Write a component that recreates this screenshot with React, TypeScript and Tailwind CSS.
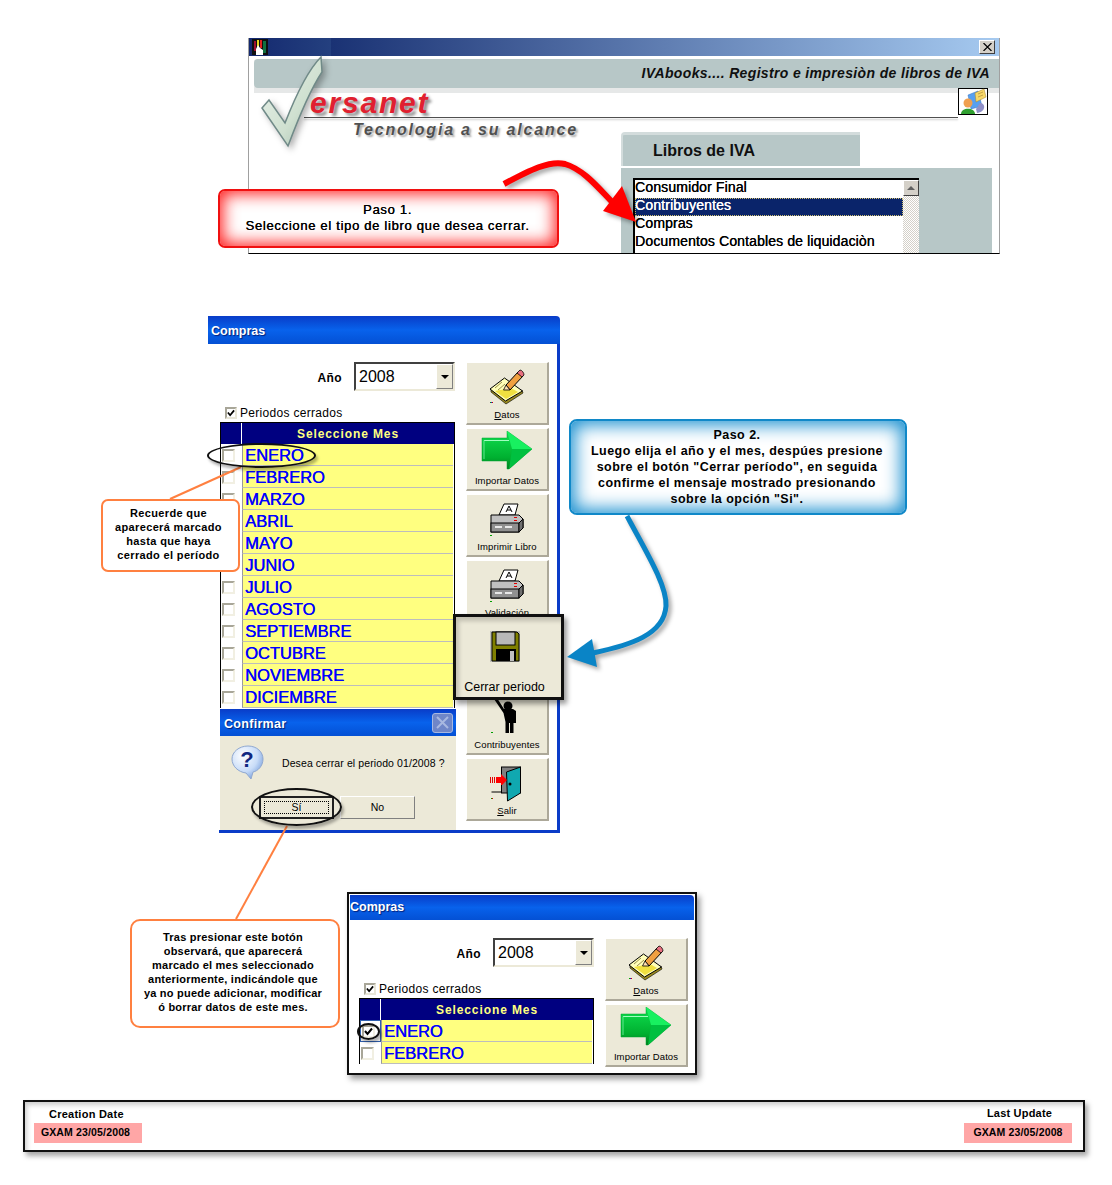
import type { ReactNode } from 'react';

const MONTHS = ['ENERO', 'FEBRERO', 'MARZO', 'ABRIL', 'MAYO', 'JUNIO', 'JULIO', 'AGOSTO', 'SEPTIEMBRE', 'OCTUBRE', 'NOVIEMBRE', 'DICIEMBRE'];

const sans = "font-['Liberation_Sans',Arial,sans-serif]";

function NoteIcon() {
  return (
    <svg width="36" height="38" viewBox="0 -1 36 38" className="overflow-visible">
      <path d="M2 24 L17 36 L34 25 L33 22 L17 32 L2 21 Z" fill="#9a8a20" stroke="#000" strokeWidth="0.6" />
      <path d="M1 21 L15.5 10 L33.5 23 L16.5 33 Z" fill="#ffffb8" stroke="#000" strokeWidth="1" />
      <path d="M6 23 L17 31 L29 24 L22 20 Z" fill="#f0e040" />
      <path d="M6 20 L13 14 M9 22 L16 16" stroke="#706020" strokeWidth="0.7" />
      <path d="M17 17 L29 4 L34 8 L21 22 Z" fill="#f0a040" stroke="#000" strokeWidth="1" />
      <path d="M14.5 22 L17 17 L21 22 Z" fill="#ffe0b0" stroke="#000" strokeWidth="0.8" />
      <path d="M28 5 L31 2 C33 2 35 5 35 7 L33 9 Z" fill="#e87080" stroke="#000" strokeWidth="0.8" />
      <rect x="1" y="34" width="1" height="1" fill="#00a000" />
      <rect x="2" y="34" width="1" height="1" fill="#2020d0" />
      <rect x="3" y="34" width="1" height="1" fill="#d00000" />
    </svg>
  );
}

function ArrowIcon() {
  return (
    <svg width="52" height="42" viewBox="0 0 52 42">
      <defs>
        <linearGradient id="arr" x1="0" y1="0" x2="0" y2="1">
          <stop offset="0" stopColor="#10e050" />
          <stop offset="0.7" stopColor="#00b030" />
          <stop offset="1" stopColor="#008020" />
        </linearGradient>
      </defs>
      <path d="M1 7 L26 7 L26 0 L51 18 L28 38 L26 38 L26 30 L1 30 Z" fill="url(#arr)" stroke="#00a030" strokeWidth="0.5" />
      <path d="M26 0 L51 18 L31 18 Z" fill="#18f060" />
      <path d="M31 18 L51 18 L28 38 Z" fill="#00c040" />
      <path d="M3 9.5 H28" stroke="#a0ffc0" strokeWidth="1" />
      <path d="M3 9.5 V28" stroke="#60e890" strokeWidth="1" />
    </svg>
  );
}

function PrinterIcon() {
  return (
    <svg width="36" height="38" viewBox="0 -2 36 38">
      <path d="M10 14 L15 3 L29 3 L26 14 Z" fill="#fff" stroke="#000" />
      <path d="M17 11 L20 5 L23 11 M18 9 H22" fill="none" stroke="#000" />
      <path d="M2 14 H30 L34 18 V27 L30 31 H2 Z" fill="#c0c0c0" stroke="#000" />
      <rect x="2" y="22" width="28" height="9" fill="#909090" stroke="#000" />
      <path d="M30 22 L34 18 V27 L30 31 Z" fill="#707070" stroke="#000" />
      <rect x="6" y="25" width="7" height="2" fill="#e8e8e8" />
      <rect x="16" y="25" width="7" height="2" fill="#e8e8e8" />
      <rect x="25" y="16" width="3" height="1" fill="#e00000" />
      <rect x="25" y="19" width="3" height="1" fill="#e00000" />
      <rect x="1" y="34" width="2" height="1" fill="#00a000" />
    </svg>
  );
}

function PersonIcon() {
  return (
    <svg width="36" height="38" viewBox="0 -1 36 38">
      <circle cx="19" cy="8" r="4.5" fill="#000" />
      <path d="M5 1 L8 0 L15 11 H24 L27 13 V25 H24.5 V35 H21 V25 H20 V35 H16.5 V24 L14.5 15 Z" fill="#000" />
      <rect x="2" y="34" width="2" height="1" fill="#00a000" />
    </svg>
  );
}

function DoorIcon() {
  return (
    <svg width="36" height="38" viewBox="0 -2 36 38" className="overflow-visible">
      <rect x="12.5" y="2" width="19" height="26" fill="#808080" stroke="#000" />
      <path d="M17.5 7 L31.5 2 V28 L18.5 36 Z" fill="#10a8b0" stroke="#000" />
      <circle cx="21" cy="19" r="1.5" fill="#000" />
      <path d="M1.5 12 V18 M3.5 12 V18 M5.5 12 V18" stroke="#e00000" strokeWidth="1" />
      <path d="M7 12 H12 V9 L18 15 L12 21 V18 H7 Z" fill="#ff0000" />
      <path d="M2.5 27 H12.5 V20" fill="none" stroke="#000" />
      <rect x="2" y="33" width="1" height="1" fill="#00a000" />
      <rect x="3" y="33" width="1" height="1" fill="#d00000" />
    </svg>
  );
}

function FloppyIcon() {
  return (
    <svg width="32" height="34" viewBox="0 0 32 34">
      <rect x="1" y="1" width="30" height="31" fill="#c0c0b8" />
      <path d="M3 2 H28 L30 4 V31 H3 Z" fill="#808000" stroke="#000" />
      <rect x="7" y="2" width="19" height="13" fill="#b8b8b8" stroke="#000" />
      <rect x="7" y="19" width="20" height="12" fill="#000" />
      <rect x="21" y="21" width="4" height="10" fill="#c0c0c0" />
    </svg>
  );
}

function QuestionIcon() {
  return (
    <svg width="34" height="36" viewBox="0 0 34 36">
      <defs>
        <radialGradient id="bub" cx="0.35" cy="0.3" r="0.8">
          <stop offset="0" stopColor="#ffffff" />
          <stop offset="0.6" stopColor="#c8dcf8" />
          <stop offset="1" stopColor="#7098d8" />
        </radialGradient>
      </defs>
      <path d="M17 1 C26 1 32 7 32 14 C32 21 27 26 22 27 L20 34 L15 28 C7 27 1 21 1 14 C1 7 8 1 17 1 Z" fill="url(#bub)" stroke="#90a8d0" />
      <text x="16" y="22" textAnchor="middle" fontFamily="Liberation Sans" fontWeight="700" fontSize="22" fill="#102880">?</text>
    </svg>
  );
}

function UserHelpIcon() {
  return (
    <svg width="30" height="27" viewBox="0 0 30 27">
      <rect x="0.5" y="0.5" width="29" height="26" fill="#fff" stroke="#000" />
      <path d="M10 7 L20 3 L24 18 L13 21 Z" fill="#58a0f0" stroke="#3070c0" strokeWidth="0.5" />
      <path d="M17 5 L26 1 L28 9 L22 12 L18 14 Z" fill="#f8d868" stroke="#a08030" strokeWidth="0.5" />
      <path d="M20 6 L25 4 M20 9 L25 7" stroke="#a08030" strokeWidth="0.6" />
      <path d="M22 15 C28 15 28 24 19 25 L18 21 Z" fill="#9090c8" />
      <circle cx="10" cy="15" r="4.5" fill="#f0a050" />
      <path d="M3 26 C3 19 17 19 17 26 Z" fill="#30a030" />
    </svg>
  );
}

function ToolButton({ icon, label, hot }: { icon?: ReactNode; label?: string; hot?: string }) {
  return (
    <div className="w-[83px] h-[63px] flex flex-col items-center bg-[#ece9d8] border-r-2 border-b-2 border-r-[#aca899] border-b-[#aca899] border-t border-l border-t-white border-l-white">
      <div className="h-[42px] mt-[2px] flex items-center justify-center">{icon}</div>
      <span className={`${sans} text-[9.5px] leading-[12px] tracking-[0.1px] text-black whitespace-nowrap mt-[2px]`}>
        {hot && <span className="underline">{hot}</span>}
        {label}
      </span>
    </div>
  );
}

function Checkbox({ checked }: { checked?: boolean }) {
  return (
    <span className="w-[13px] h-[13px] flex items-center justify-center bg-white border-2 border-t-[#a8a698] border-l-[#a8a698] border-r-[#f1efe2] border-b-[#f1efe2]">
      {checked && (
        <svg width="9" height="9" viewBox="0 0 9 9">
          <path d="M1 4 L3.5 7 L8 1.5" fill="none" stroke="#000" strokeWidth="2" />
        </svg>
      )}
    </span>
  );
}

function MonthRow({ name, checked }: { name: string; checked?: boolean }) {
  return (
    <div className="flex h-[22px]">
      <div className={`w-[21px] flex items-center pl-[1px] ${checked ? 'border border-[#3060b0]' : ''}`}>
        <Checkbox checked={checked} />
      </div>
      <div className="flex-1 flex items-center bg-[#ffff80] border-b border-b-[#bdbdbd] border-l border-l-[#9a9a9a] mr-[1px]">
        <span className={`${sans} pl-[2px] text-[16.5px] leading-[20px] text-[#0000ff] [text-shadow:0.4px_0_0_#0000ff]`}>{name}</span>
      </div>
    </div>
  );
}

function ComprasForm({ months, checkFirst, children }: { months: string[]; checkFirst?: boolean; children: ReactNode }) {
  return (
    <div className="flex bg-white">
      <div className="w-[235px]">
        <div className="flex items-center justify-end gap-[12px] pt-[18px]">
          <span className={`${sans} pt-[2px] text-[12px] font-bold tracking-[0.4px] text-black`}>Año</span>
          <div className="w-[101px] h-[29px] flex border-2 border-t-[#404040] border-l-[#404040] border-r-[#ece9d8] border-b-[#ece9d8] bg-white">
            <span className={`${sans} flex-1 pl-[3px] pt-[1px] text-[16px] leading-[24px] text-black`}>2008</span>
            <div className="w-[17px] flex items-center justify-center bg-[#ece9d8] border border-t-white border-l-white border-r-[#808080] border-b-[#808080]">
              <span className="w-0 h-0 border-l-[4px] border-r-[4px] border-t-[4px] border-l-transparent border-r-transparent border-t-black" />
            </div>
          </div>
        </div>
        <div className="flex items-center gap-[3px] pl-[5px] mt-[15px] h-[14px]">
          <span className="w-[12px] h-[12px] flex items-center justify-center bg-white border-2 border-t-[#a8a698] border-l-[#a8a698] border-r-[#e8e6d8] border-b-[#e8e6d8]">
            <svg width="8" height="8" viewBox="0 0 9 9">
              <path d="M1 4 L3.5 7 L8 1.5" fill="none" stroke="#000" strokeWidth="2" />
            </svg>
          </span>
          <span className={`${sans} text-[12px] tracking-[0.3px] text-black`}>Periodos cerrados</span>
        </div>
        <div className="mt-[2px] border-l border-r border-black">
          <div className="flex h-[22px] bg-[#000080] border-t border-black">
            <div className="w-[21px] border-r border-r-white" />
            <div className={`${sans} flex-1 pt-[1px] text-center text-[12px] leading-[21px] font-bold tracking-[0.9px] text-[#ffff80]`}>Seleccione Mes</div>
          </div>
          {months.map((m, i) => (
            <MonthRow key={m} name={m} checked={checkFirst && i === 0} />
          ))}
        </div>
      </div>
      <div className="flex flex-col gap-[3px] ml-[11px] pt-[18px]">{children}</div>
    </div>
  );
}

function TitleBar({ title, className }: { title: string; className: string }) {
  return (
    <div className={`flex items-center bg-gradient-to-b from-[#0a3cc8] via-[#0862ec] to-[#0450d4] rounded-tr-[4px] ${className}`}>
      <span className={`${sans} text-[12.5px] font-bold text-white [text-shadow:1px_1px_1px_#00207a]`}>{title}</span>
    </div>
  );
}

function VersanetWindow() {
  return (
    <div className="absolute left-[248px] top-[38px] w-[752px] h-[216px] flex flex-col bg-white border-l border-r border-l-[#a0a0a0] border-r-[#a0a0a0] border-b border-b-black overflow-hidden">
      <div className="h-[18px] shrink-0 flex items-center justify-between bg-[linear-gradient(90deg,#14296f_0,#24407f_82px,#1a3274_82px,#a6caf0_100%)]">
        <svg className="ml-[3px]" width="16" height="16" viewBox="0 0 16 16">
          <rect width="16" height="16" fill="#101010" />
          <rect x="2" y="2" width="2" height="10" fill="#a01030" />
          <rect x="5" y="1" width="2" height="7" fill="#e8d820" />
          <rect x="8" y="1" width="2" height="8" fill="#e02020" />
          <rect x="11" y="2" width="3" height="12" fill="#107040" />
          <path d="M4 16 V10 L6 6 L8 9 L11 11 L11 16 Z" fill="#fff" />
        </svg>
        <div className="w-[16px] h-[14px] mr-[4px] flex items-center justify-center bg-[#d4d0c8] border border-t-white border-l-white border-r-[#404040] border-b-[#404040]">
          <svg width="9" height="8" viewBox="0 0 9 8">
            <path d="M0.5 0 L8.5 8 M8.5 0 L0.5 8" stroke="#000" strokeWidth="1.2" />
          </svg>
        </div>
      </div>
      <div className="mt-[3px] ml-[5px] shrink-0 h-[34px] bg-[#e6e8e8] rounded-tl-[4px]">
        <div className="h-[29px] flex items-center justify-end pr-[9px] bg-[#b7c7c7] rounded-l-[4px]">
          <span className={`${sans} text-[14px] font-bold italic text-[#101010] tracking-[0.35px]`}>IVAbooks.... Registro e impresiòn de libros de IVA</span>
        </div>
      </div>
      <div className="flex justify-end mr-[7px] -mt-[1px] flex-1">
        <div className="w-[371px] flex flex-col mt-[40px] bg-white">
          <div className="w-[239px] h-[34px] flex items-center pl-[30px] bg-[#b7c7c7] border-t-[3px] border-t-[#d3dcdc] border-l-2 border-l-[#d3dcdc] rounded-tl-[4px]">
            <span className={`${sans} text-[16px] font-bold text-[#101010]`}>Libros de IVA</span>
          </div>
          <div className="flex-1 mt-[2px] pl-[12px] pt-[10px] bg-[#b7c7c7]">
            <div className="w-[286px] h-[90px] flex bg-white border-2 border-black border-r-0 border-b-0">
              <div className="flex-1">
                {['Consumidor Final', 'Contribuyentes', 'Compras', 'Documentos Contables de liquidaciòn'].map((t) => (
                  <div key={t} className={`h-[18px] ${sans} text-[14px] leading-[15px] tracking-[0.13px] [text-shadow:0.3px_0_0_currentColor] whitespace-nowrap ${t === 'Contribuyentes' ? 'bg-[#0a246a] text-white outline-1 outline-dotted outline-offset-[-1px] outline-[#d0c070]' : 'text-black'}`}>
                    {t}
                  </div>
                ))}
              </div>
              <div className="w-[16px] bg-[repeating-conic-gradient(#d4d0c8_0_25%,#ffffff_0_50%)] bg-[length:2px_2px]">
                <div className="h-[16px] flex items-center justify-center bg-[#d4d0c8] border border-t-white border-l-white border-r-[#404040] border-b-[#404040]">
                  <span className="w-0 h-0 border-l-[4px] border-r-[4px] border-b-[4px] border-l-transparent border-r-transparent border-b-[#606060]" />
                </div>
              </div>
            </div>
          </div>
        </div>
      </div>
    </div>
  );
}

function VersanetLogo() {
  return (
    <>
      <div className="absolute left-[304px] top-[117px] w-[654px] h-[1px] bg-[#505050] shadow-[0_2px_2px_rgba(0,0,0,0.25)]" />
      <svg className="absolute left-[258px] top-[54px] drop-shadow-[3px_3px_3px_rgba(0,0,0,0.3)]" width="72" height="100" viewBox="0 0 72 100">
        <defs>
          <linearGradient id="chk" x1="0" y1="0" x2="1" y2="1">
            <stop offset="0" stopColor="#eaf2ec" />
            <stop offset="0.6" stopColor="#cfe0d0" />
            <stop offset="1" stopColor="#9fb8aa" />
          </linearGradient>
        </defs>
        <path d="M4 54 L11 46 L27 69 C36 46 48 18 63 3 L64 18 C52 36 42 60 30 92 Z" fill="url(#chk)" stroke="#708a88" strokeWidth="1.5" />
      </svg>
      <div className={`${sans} absolute left-[310px] top-[86px] text-[30px] leading-[34px] font-bold italic tracking-[1.8px] text-[#e02030] [text-shadow:3px_3px_3px_rgba(0,0,0,0.45)]`}>ersanet</div>
      <div className={`${sans} absolute left-[353px] top-[120px] text-[16px] leading-[19px] font-bold italic tracking-[1.8px] text-[#505050] [text-shadow:2px_2px_2px_rgba(0,0,0,0.35)]`}>Tecnologia a su alcance</div>
      <div className="absolute left-[958px] top-[88px]">
        <UserHelpIcon />
      </div>
    </>
  );
}

function Callout({ className, children }: { className: string; children: ReactNode }) {
  return <div className={`absolute flex items-center justify-center text-center ${sans} font-bold text-black ${className}`}>{children}</div>;
}

function Ellipse({ className }: { className: string }) {
  return <div className={`absolute rounded-[50%] border-2 border-[#101010] shadow-[2px_3px_3px_rgba(0,0,0,0.3)] ${className}`} />;
}

export default function App() {
  return (
    <div className="relative w-[1112px] h-[1185px] bg-white overflow-hidden">
      <VersanetWindow />
      <VersanetLogo />

      {/* Ventana principal de Compras */}
      <div className="absolute left-[208px] top-[316px] w-[352px] h-[517px] flex flex-col bg-white">
        <TitleBar title="Compras" className="h-[28px] pl-[3px] pt-[3px]" />
        <div className="flex-1 border-r-[3px] border-r-[#0a3cc8] pl-[12px] bg-white">
          <ComprasForm months={MONTHS}>
            <ToolButton icon={<NoteIcon />} hot="D" label="atos" />
            <ToolButton icon={<ArrowIcon />} label="Importar Datos" />
            <ToolButton icon={<PrinterIcon />} label="Imprimir Libro" />
            <ToolButton icon={<PrinterIcon />} label="Validación" />
            <ToolButton />
            <ToolButton icon={<PersonIcon />} label="Contribuyentes" />
            <ToolButton icon={<DoorIcon />} hot="S" label="alir" />
          </ComprasForm>
        </div>
        <div className="absolute left-[11px] right-0 bottom-0 h-[3px] bg-[#0a3cc8]" />
      </div>

      {/* Confirmar */}
      <div className="absolute left-[220px] top-[709px] w-[236px] h-[121px] flex flex-col bg-[#ece9d8]">
        <div className="h-[27px] flex items-center justify-between pl-[4px] pr-[3px] bg-gradient-to-b from-[#0a3cc8] via-[#0862ec] to-[#0450d4]">
          <span className={`${sans} pt-[3px] text-[12.5px] font-bold tracking-[0.3px] text-white [text-shadow:1px_1px_1px_#00207a]`}>Confirmar</span>
          <div className="w-[21px] h-[20px] flex items-center justify-center rounded-[3px] bg-[#6f86c8] border border-[#a8b8e0]">
            <svg width="13" height="13" viewBox="0 0 13 13">
              <path d="M1 1 L12 12 M12 1 L1 12" stroke="#a8b8e0" strokeWidth="2" />
            </svg>
          </div>
        </div>
        <div className="flex items-center pl-[11px] h-[54px]">
          <QuestionIcon />
          <span className={`${sans} ml-[17px] pt-[1px] text-[10.5px] tracking-[0.1px] text-black`}>Desea cerrar el periodo 01/2008 ?</span>
        </div>
        <div className="flex pl-[39px] gap-[6px] mt-[6px]">
          <div className="w-[75px] h-[23px] p-[3px] bg-[#ece9d8] border-2 border-[#202020]">
            <div className={`${sans} h-full flex items-center justify-center border border-dotted border-black text-[10.5px] text-black`}>Sí</div>
          </div>
          <div className={`${sans} w-[75px] h-[23px] flex items-center justify-center bg-[#ece9d8] border border-t-white border-l-white border-r-[#808080] border-b-[#808080] text-[10.5px] text-black`}>No</div>
        </div>
      </div>

      {/* Boton resaltado */}
      <div className="absolute left-[453px] top-[614px] w-[111px] h-[86px] flex flex-col items-center pr-[8px] bg-[#ece9d8] border-[3px] border-[#101010] shadow-[3px_4px_5px_rgba(0,0,0,0.4),inset_3px_4px_4px_rgba(0,0,0,0.18)]">
        <div className="mt-[13px]">
          <FloppyIcon />
        </div>
        <span className={`${sans} mt-[16px] text-[12.5px] leading-[14px] text-black whitespace-nowrap`}>Cerrar periodo</span>
      </div>

      {/* Ventana reducida, con enero cerrado */}
      <div className="absolute left-[347px] top-[892px] w-[350px] h-[183px] border-2 border-[#101010] bg-white overflow-hidden shadow-[3px_4px_6px_rgba(0,0,0,0.4)]">
        <div className="mx-[1px] mt-[1px]">
          <TitleBar title="Compras" className="h-[25px] pl-0" />
        </div>
        <div className="pl-[10px]">
          <ComprasForm months={MONTHS.slice(0, 2)} checkFirst>
            <ToolButton icon={<NoteIcon />} hot="D" label="atos" />
            <ToolButton icon={<ArrowIcon />} label="Importar Datos" />
          </ComprasForm>
        </div>
      </div>

      {/* Flechas y lineas de guia */}
      <svg className="absolute left-0 top-0 pointer-events-none" width="1112" height="1185" viewBox="0 0 1112 1185">
        <g className="drop-shadow-[3px_3px_2px_rgba(0,0,0,0.35)]">
          <path d="M504 184 C530 170 550 160 565 164 C585 170 600 190 615 205" fill="none" stroke="#ff0000" strokeWidth="6" />
          <path d="M636 222 L603 211 L622 186 Z" fill="#ff0000" />
        </g>
        <g className="drop-shadow-[3px_3px_2px_rgba(0,0,0,0.35)]">
          <path d="M627 516 C645 550 667 585 666 606 C664 635 630 645 593 653" fill="none" stroke="#0a84c6" strokeWidth="5" />
          <path d="M567 657 L592 639 L597 667 Z" fill="#0a84c6" />
        </g>
        <path d="M241 467 L170 499" stroke="#ff8040" strokeWidth="2" />
        <path d="M287 826 L236 919" stroke="#ff8040" strokeWidth="2" />
      </svg>

      <Ellipse className="left-[207px] top-[443px] w-[109px] h-[25px]" />
      <Ellipse className="left-[251px] top-[788px] w-[91px] h-[38px]" />
      <Ellipse className="left-[357px] top-[1023px] w-[23px] h-[17px]" />

      <Callout className="left-[218px] top-[189px] w-[341px] h-[59px] pb-[2px] pr-[2px] bg-white rounded-[7px] border-2 border-[#f01010] shadow-[inset_0_0_16px_3px_#ff2020] text-[13px] leading-[16px] tracking-[0.69px]">
        <p className="font-normal [text-shadow:0.3px_0_0_#000]">
          Paso 1.
          <br />
          Seleccione el tipo de libro que desea cerrar.
        </p>
      </Callout>

      <Callout className="left-[569px] top-[419px] w-[338px] h-[96px] pr-[2px] bg-white rounded-[8px] border-2 border-[#1088c8] shadow-[inset_0_0_18px_4px_#1a90d0] text-[12.5px] leading-[16px] tracking-[0.47px]">
        <p>
          Paso 2.
          <br />
          Luego elija el año y el mes, despúes presione
          <br />
          sobre el botón "Cerrar período", en seguida
          <br />
          confirme el mensaje mostrado presionando
          <br />
          sobre la opción "Si".
        </p>
      </Callout>

      <Callout className="left-[101px] top-[499px] w-[139px] h-[73px] pb-[4px] pr-[4px] bg-white rounded-[7px] border-2 border-[#ff8040] text-[11px] leading-[14px] tracking-[0.35px]">
        <p>
          Recuerde que
          <br />
          aparecerá marcado
          <br />
          hasta que haya
          <br />
          cerrado el período
        </p>
      </Callout>

      <Callout className="left-[130px] top-[919px] w-[210px] h-[109px] pb-[4px] pr-[4px] bg-white rounded-[10px] border-2 border-[#ff8040] text-[11px] leading-[14px] tracking-[0.22px]">
        <p>
          Tras presionar este botón
          <br />
          observará, que aparecerá
          <br />
          marcado el mes seleccionado
          <br />
          anteriormente, indicándole que
          <br />
          ya no puede adicionar, modificar
          <br />
          ó borrar datos de este mes.
        </p>
      </Callout>

      {/* Pie con fechas */}
      <div className="absolute left-[23px] top-[1100px] w-[1062px] h-[52px] flex justify-between bg-white border-2 border-[#101010] shadow-[3px_4px_5px_rgba(0,0,0,0.35),inset_4px_5px_5px_-2px_rgba(0,0,0,0.2)] pl-[9px] pr-[11px]">
        <div className="flex flex-col items-start">
          <span className={`${sans} ml-[15px] mt-[5px] text-[11px] leading-[14px] font-bold tracking-[0.25px] text-black`}>Creation Date</span>
          <span className={`${sans} mt-[2px] w-[108px] h-[20px] pr-[5px] flex items-center justify-center bg-[#ffa6a6] text-[10.5px] font-bold tracking-[0.15px] text-black`}>GXAM 23/05/2008</span>
        </div>
        <div className="flex flex-col items-center">
          <span className={`${sans} ml-[3px] mt-[4px] text-[11px] leading-[14px] font-bold tracking-[0.2px] text-black`}>Last Update</span>
          <span className={`${sans} mt-[3px] w-[108px] h-[20px] flex items-center justify-center bg-[#ffa6a6] text-[10.5px] font-bold tracking-[0.15px] text-black`}>GXAM 23/05/2008</span>
        </div>
      </div>
    </div>
  );
}
